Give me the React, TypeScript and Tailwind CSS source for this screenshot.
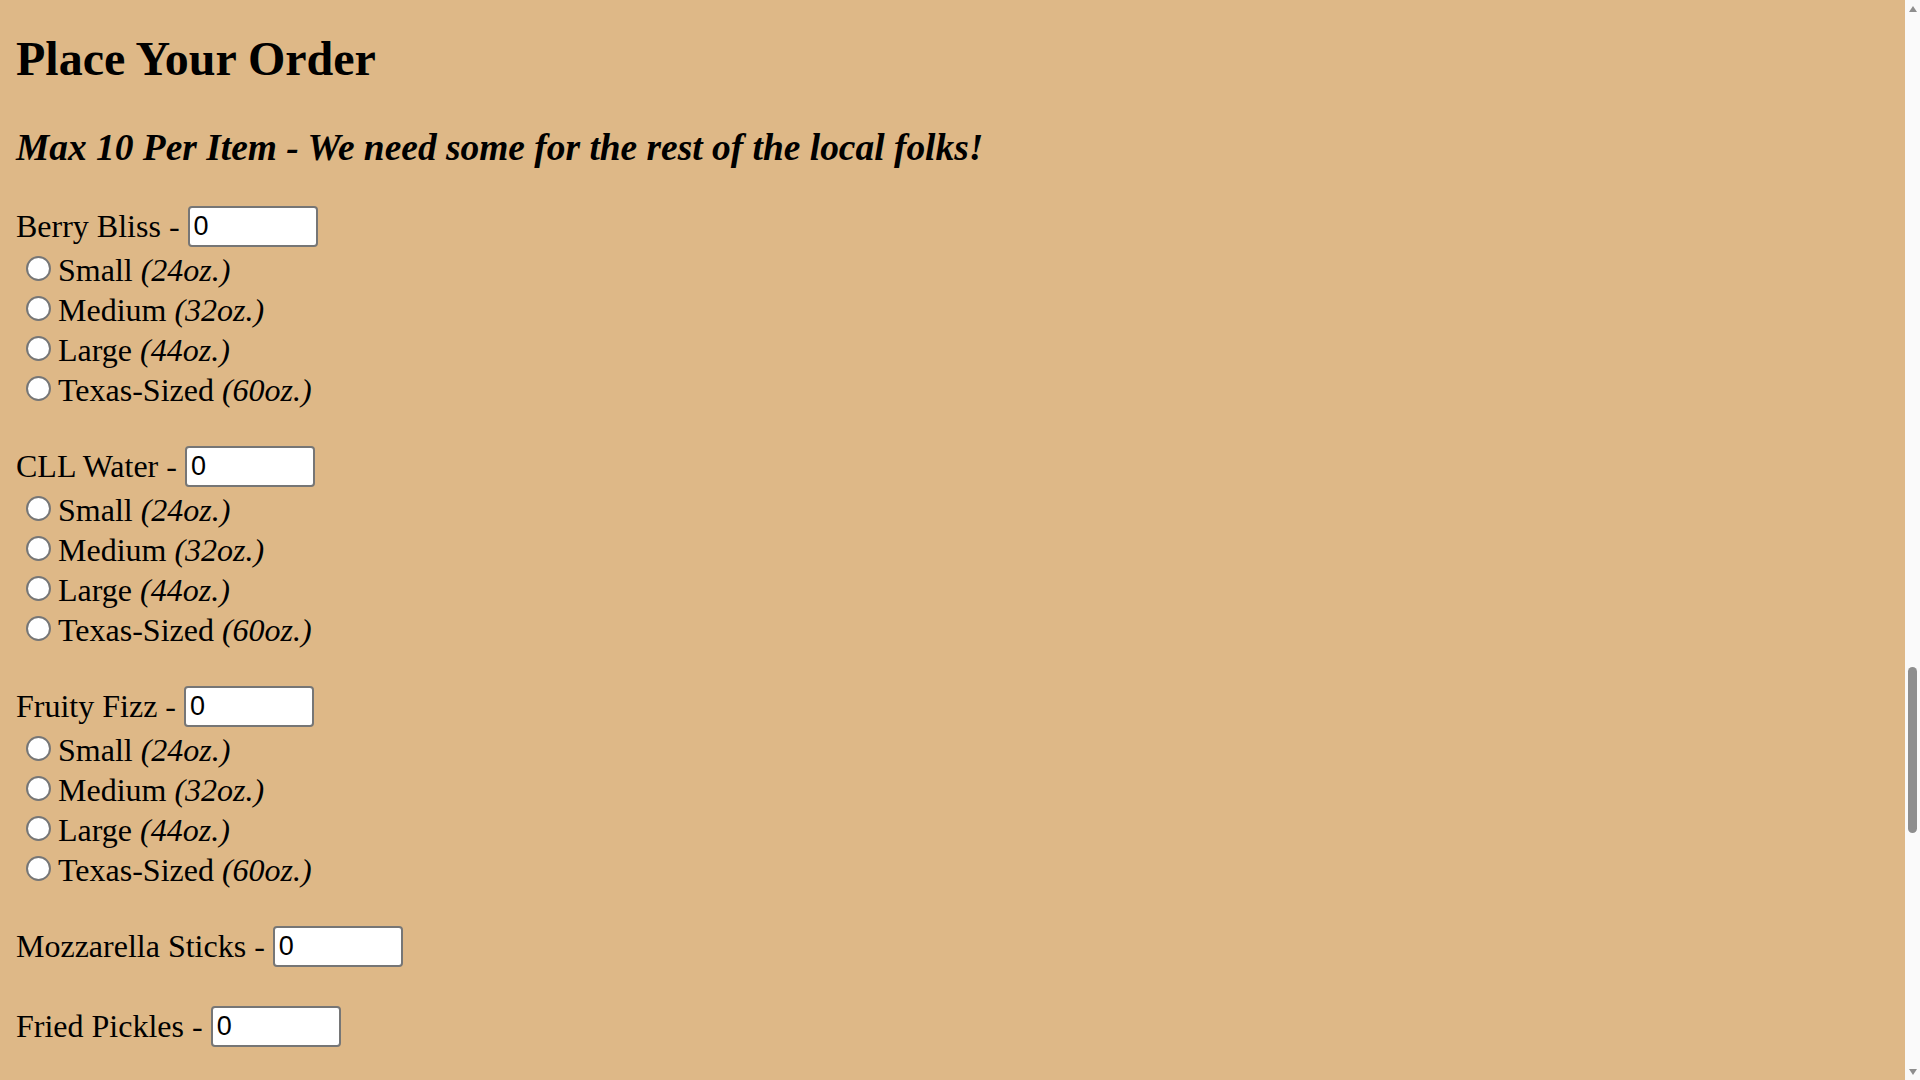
import React from "react";

const drinks = ["Berry Bliss", "CLL Water", "Fruity Fizz"];
const sizes: [string, string][] = [
  ["Small", "(24oz.)"],
  ["Medium", "(32oz.)"],
  ["Large", "(44oz.)"],
  ["Texas-Sized", "(60oz.)"],
];
const foods = ["Mozzarella Sticks", "Fried Pickles"];

function QtyLine({ label }: { label: string }) {
  return (
    <div className="flex items-start h-[41px] gap-[8px]">
      <span className="leading-[38px] mt-[1px] whitespace-nowrap">{label} -</span>
      <input
        type="text"
        defaultValue="0"
        className="w-[130px] h-[41px] border-2 border-[#767676] rounded-[4px] bg-white pl-[4px] text-[27px] text-black font-['Liberation_Sans',Arial,sans-serif] outline-none"
      />
    </div>
  );
}

function SizeRow({ name, oz }: { name: string; oz: string }) {
  return (
    <div className="flex items-start h-[40px]">
      <span className="ml-[10px] mt-[7px] w-[25px] h-[25px] rounded-full border-2 border-[#767676] bg-white shrink-0" />
      <span className="ml-[7px] leading-[42px] whitespace-nowrap">
        {name} <i>{oz}</i>
      </span>
    </div>
  );
}

export default function App() {
  return (
    <div className="flex w-full h-[1080px] overflow-hidden bg-[#deb887] text-black font-['Liberation_Serif','Times_New_Roman',serif]">
      <div className="flex-1 pl-[16px] text-[32px]">
        <h1 className="mt-[31px] text-[48px] leading-[56px] font-bold">Place Your Order</h1>
        <h2 className="mt-[39px] text-[37.44px] leading-[44px] font-bold italic">
          Max 10 Per Item - We need some for the rest of the local folks!
        </h2>
        <div className="mt-[36px] flex flex-col gap-[37px]">
          {drinks.map((d) => (
            <div key={d} className="flex flex-col">
              <QtyLine label={d} />
              <div className="mt-[2px] flex flex-col">
                {sizes.map(([n, o]) => (
                  <SizeRow key={n} name={n} oz={o} />
                ))}
              </div>
            </div>
          ))}
          {foods.map((f) => (
            <div key={f} className="h-[43px]">
              <QtyLine label={f} />
            </div>
          ))}
        </div>
      </div>
      <div className="w-[15px] h-full bg-[#fafafa] flex flex-col shrink-0">
        <div className="h-[17px] flex items-center justify-center">
          <svg width="8" height="6" viewBox="0 0 8 6">
            <polygon points="4,0 8,6 0,6" fill="#8e8e8e" />
          </svg>
        </div>
        <div className="h-[650px]" />
        <div className="mx-auto w-[9px] h-[166px] rounded-full bg-[#8e8e8e]" />
        <div className="flex-1" />
        <div className="h-[17px] flex items-center justify-center">
          <svg width="8" height="6" viewBox="0 0 8 6">
            <polygon points="0,0 8,0 4,6" fill="#8e8e8e" />
          </svg>
        </div>
      </div>
    </div>
  );
}
